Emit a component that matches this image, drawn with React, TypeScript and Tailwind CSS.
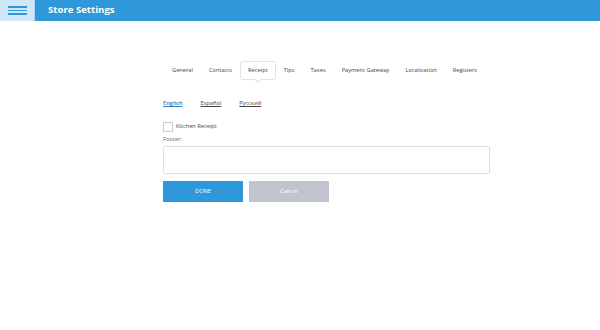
import React from "react";

const tabs = ["General", "Contacts", "Receipt", "Tips", "Taxes", "Payment Gateway", "Localization", "Registers"];

export default function App() {
  return (
    <div className="w-[600px] h-[330px] bg-white overflow-hidden" style={{ fontFamily: '"Open Sans", sans-serif' }}>
      <div className="flex h-[21px] bg-[#2e98da]">
        <div className="w-[35px] bg-[#cfe7f6] border-r border-[#a9d3ee] flex items-center justify-center">
          <div className="flex flex-col gap-[2px]">
            <div className="w-[19px] h-[1.5px] bg-[#2e98da]" />
            <div className="w-[19px] h-[1.5px] bg-[#2e98da]" />
            <div className="w-[19px] h-[1.5px] bg-[#2e98da]" />
          </div>
        </div>
        <div className="pl-[13px] flex items-center text-white font-bold text-[9.6px]">Store Settings</div>
      </div>
      <div className="ml-[163px] w-[327px]">
        <div className="flex mt-[40px] pl-[1px] text-[5.7px] text-[#444]">
          {tabs.map((t) =>
            t === "Receipt" ? (
              <div key={t} className="relative h-[19px] px-[7px] flex items-center border border-[#e3e3e3] rounded-[2px] bg-white">
                {t}
                <div className="absolute left-1/2 -bottom-[3px] w-[5px] h-[5px] bg-white border-r border-b border-[#e3e3e3] rotate-45 -translate-x-1/2" />
              </div>
            ) : (
              <div key={t} className="h-[19px] px-[8px] flex items-center">{t}</div>
            )
          )}
        </div>
        <div className="flex gap-[18px] mt-[19px] text-[5.7px]">
          <span className="text-[#2e7bc4] font-semibold underline">English</span>
          <span className="text-[#444] underline">Español</span>
          <span className="text-[#444] underline">Русский</span>
        </div>
        <div className="flex items-center mt-[14px] gap-[3px]">
          <div className="w-[10px] h-[10px] border border-[#ccc] bg-white" />
          <span className="text-[5.7px] text-[#444]">Kitchen Receipt</span>
        </div>
        <div className="text-[5.7px] text-[#666] mt-[3px] leading-[8px]">Footer:</div>
        <div className="mt-[3px] h-[28px] border border-[#ddd] rounded-[2px]" />
        <div className="flex gap-[6px] mt-[7px]">
          <div className="w-[80px] h-[21px] bg-[#2e98da] text-white text-[5.7px] flex items-center justify-center">DONE</div>
          <div className="w-[80px] h-[21px] bg-[#c0c4cc] text-white text-[5.7px] flex items-center justify-center">Cancel</div>
        </div>
      </div>
    </div>
  );
}
